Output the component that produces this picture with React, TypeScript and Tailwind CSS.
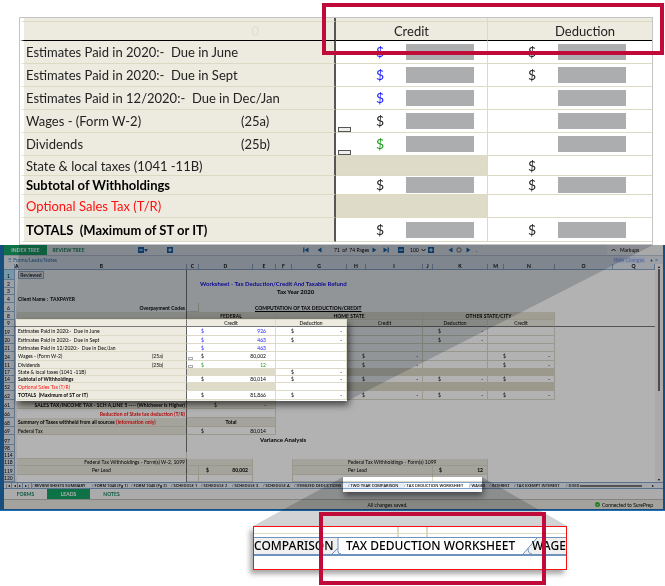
import type { ReactNode } from "react";
import clsx from "clsx";

type BigRow = {
  label: string;
  code?: string;
  height: string;
  labelClass?: string;
  creditSign?: string;
  creditBox?: boolean;
  creditShaded?: boolean;
  deductionSign?: boolean;
  deductionBox?: boolean;
  handle?: boolean;
};

const bigRows: BigRow[] = [
  { label: "Estimates Paid in 2020:-  Due in June", height: "h-[23px]", creditSign: "text-[#1a1aff]", creditBox: true, deductionSign: true, deductionBox: true },
  { label: "Estimates Paid in 2020:-  Due in Sept", height: "h-[23px]", creditSign: "text-[#1a1aff]", creditBox: true, deductionSign: true, deductionBox: true },
  { label: "Estimates Paid in 12/2020:-  Due in Dec/Jan", height: "h-[23px]", creditSign: "text-[#1a1aff]", creditBox: true, deductionBox: true },
  { label: "Wages - (Form W-2)", code: "(25a)", height: "h-[23px]", creditSign: "text-[#222]", creditBox: true, deductionBox: true, handle: true },
  { label: "Dividends", code: "(25b)", height: "h-[23px]", creditSign: "text-[#1c9a1c]", creditBox: true, deductionBox: true, handle: true },
  { label: "State & local taxes (1041 -11B)", height: "h-[20px]", creditShaded: true, deductionSign: true },
  { label: "Subtotal of Withholdings", height: "h-[19px]", labelClass: "font-bold text-black", creditSign: "text-[#222]", creditBox: true, deductionSign: true, deductionBox: true },
  { label: "Optional Sales Tax (T/R)", height: "h-[23px]", labelClass: "text-[#ff1010]", creditShaded: true },
  { label: "TOTALS  (Maximum of ST or IT)", height: "h-[24px]", labelClass: "font-bold text-black", creditSign: "text-[#222]", creditBox: true, deductionSign: true, deductionBox: true },
];

function HiddenAmount({ sign, box }: { sign?: string; box?: boolean }) {
  return (
    <div className="flex items-center pl-10">
      <span className={clsx("w-[30px] text-[14px] leading-4", sign)}>{sign ? "$" : ""}</span>
      {box && <span className="h-4 w-[68px] bg-[#abadaf]" />}
    </div>
  );
}

function Magnified() {
  return (
    <div className="relative mr-3 ml-[19px]">
      <div className="border border-[#c4c4c4] bg-white pb-[2px]">
        <table className="w-full table-fixed border-separate border-spacing-0 text-[13px] leading-4 text-[#222]">
          <colgroup>
            <col className="w-[316px]" />
            <col className="w-[152px]" />
            <col />
          </colgroup>
          <thead>
            <tr className="h-1">
              <td className="border-r-2 border-b border-l-4 border-r-[#555] border-b-[#dddac4] border-l-white bg-[#edebe0] p-0" />
              <td className="border-r border-b border-[#dddac4] bg-[#edebe0] p-0" />
              <td className="border-b border-[#dddac4] bg-[#edebe0] p-0" />
            </tr>
            <tr className="h-[19px]">
              <th className="border-r-2 border-b border-l-4 border-r-[#555] border-b-black border-l-white bg-[#edebe0] py-0 pr-[75px] text-right font-normal text-[#dfddd2]">0</th>
              <th className="border-r border-b border-r-[#dddac4] border-b-black bg-[#edebe0] p-0 text-center font-normal">Credit</th>
              <th className="border-b border-black bg-[#edebe0] py-0 pr-0 pl-[30px] text-center font-normal">Deduction</th>
            </tr>
          </thead>
          <tbody>
            {bigRows.map((row) => (
              <tr key={row.label} className={row.height}>
                <th className="border-r-2 border-b border-l-4 border-r-[#555] border-b-[#dddac4] border-l-white bg-[#edebe0] py-0 pr-0 pl-[2px] text-left font-normal">
                  <div className={clsx("flex whitespace-pre", row.labelClass)}>
                    <span className={row.code ? "w-[215px]" : ""}>{row.label}</span>
                    {row.code && <span>{row.code}</span>}
                  </div>
                </th>
                <td className={clsx("relative border-r border-b border-[#dddac4] p-0", row.creditShaded && "bg-[#dedcc8]")}>
                  <HiddenAmount sign={row.creditSign} box={row.creditBox} />
                  {row.handle && <span className="absolute bottom-0 left-[2px] h-[5px] w-[13px] border border-[#555] bg-[#eee]" />}
                </td>
                <td className="border-b border-[#dddac4] p-0">
                  <HiddenAmount sign={row.deductionSign ? "text-[#222]" : undefined} box={row.deductionBox} />
                </td>
              </tr>
            ))}
          </tbody>
        </table>
      </div>
      <div className="absolute -top-[14px] -right-[11px] left-[303px] h-[52px] border-4 border-[#c00a3a]" />
    </div>
  );
}

/* ---------- small worksheet window ---------- */

function Arrow({ left, bar }: { left?: boolean; bar?: boolean }) {
  return (
    <svg viewBox="0 0 6 6" className={clsx("h-[6px] w-[6px]", left && "rotate-180")} fill="#1663ad">
      <path d="M0.5 0.5L4.5 3L0.5 5.5Z" />
      {bar && <path d="M4.6 0.5H5.8V5.5H4.6Z" />}
    </svg>
  );
}

function Square({ plus }: { plus?: boolean }) {
  return (
    <svg viewBox="0 0 6 6" className="h-[6px] w-[6px]">
      <path d="M0 0H6V6H0Z" fill="#1663ad" />
      <path d={plus ? "M1.2 3H4.8M3 1.2V4.8" : "M1.2 3H4.8"} stroke="#fff" strokeWidth="1" />
    </svg>
  );
}

function Toolbar() {
  return (
    <div className="flex h-[10px] items-center bg-[#e6ebf0] text-[5px] leading-[6px] text-black">
      <button className="h-full w-[43px] bg-[#15a366] font-bold text-white">INDEX TREE</button>
      <button className="h-full w-[43px] font-bold text-[#14805a]">REVIEW TREE</button>
      <div className="ml-[48px] flex w-[35px] items-center justify-between">
        <button className="flex" aria-label="Collapse tree">
          <Square />
          <svg viewBox="0 0 4 6" className="h-[6px] w-1" fill="#1663ad"><path d="M0 2H4L2 5Z" /></svg>
        </button>
        <button aria-label="Expand tree"><Square plus /></button>
      </div>
      <div className="ml-[130px] flex items-center">
        <button className="w-[13px]" aria-label="First page"><Arrow left bar /></button>
        <button className="w-[18px]" aria-label="Previous page"><Arrow left /></button>
        <span className="w-[38px] whitespace-pre">71  of  74 Pages</span>
        <button className="w-[11px]" aria-label="Next page"><Arrow /></button>
        <button className="w-[15px]" aria-label="Last page"><Arrow bar /></button>
        <button className="w-3" aria-label="Zoom out"><Square /></button>
        <span className="flex w-[18px] items-center gap-[2px]">
          100
          <svg viewBox="0 0 5 4" className="h-1 w-[5px]" fill="none" stroke="#222"><path d="M0.5 1L2.5 3L4.5 1" /></svg>
        </span>
        <button className="w-[19px]" aria-label="Zoom in"><Square plus /></button>
        <button className="w-[9px]" aria-label="Back"><Arrow left /></button>
        <svg viewBox="0 0 6 6" className="h-[6px] w-[6px]" fill="none" stroke="#555"><circle cx="3" cy="3" r="2.2" strokeWidth="0.8" /></svg>
        <button className="ml-1" aria-label="Forward"><Arrow /></button>
        <span className="ml-1">.</span>
      </div>
      <button className="ml-auto flex h-full w-[56px] items-center gap-1 bg-[#f2f3f4] pl-1">
        <svg viewBox="0 0 5 4" className="h-1 w-[5px]" fill="none" stroke="#222"><path d="M0.5 3L2.5 1L4.5 3" /></svg>
        Markups
      </button>
    </div>
  );
}

const columns = ["A", "B", "C", "D", "E", "F", "G", "H", "I", "J", "K", "M", "N", "O", "Q"];

function Money({ value, className, pad = "pl-[15px] pr-1" }: { value: string; className?: string; pad?: string }) {
  return (
    <div className={clsx("flex justify-between", pad, className)}>
      <span>$</span>
      <span>{value}</span>
    </div>
  );
}

function Row({ n, h, children }: { n: string; h: string; children?: ReactNode }) {
  return (
    <tr className={h}>
      <th className={clsx("border-r border-b border-[#8fa9c9] p-0 pr-1 text-right align-bottom font-normal text-black", n === "1" ? "bg-[#a8dcf5]" : "bg-[#dfe7f1]")}>{n}</th>
      <td className="bg-[#eef1f5] p-0" />
      {children}
    </tr>
  );
}

const line = "border-b border-[#dddac8]";
const cell = "border-r border-b border-[#dddac8] p-0";
const label = "border-b border-r border-b-[#dddac8] border-r-[#666] bg-[#edebe0] p-0 pl-px text-left font-normal";
const plain = "border-r border-[#777] p-0 pl-px";

type SmallRow = {
  n: string;
  h: string;
  name: string;
  code?: string;
  nameClass?: string;
  federal?: string;
  federalClass?: string;
  shaded?: boolean;
  home?: boolean;
  homeCredit?: boolean;
  other?: boolean;
  otherCredit?: boolean;
};

const smallRows: SmallRow[] = [
  { n: "19", h: "h-[9px]", name: "Estimates Paid in 2020:-  Due in June", federal: "926", federalClass: "text-[#1a1aff]", home: true, other: true },
  { n: "20", h: "h-[8px]", name: "Estimates Paid in 2020:-  Due in Sept", federal: "463", federalClass: "text-[#1a1aff]", home: true, other: true },
  { n: "21", h: "h-[8px]", name: "Estimates Paid in 12/2020:-  Due in Dec/Jan", federal: "463", federalClass: "text-[#1a1aff]" },
  { n: "24", h: "h-[9px]", name: "Wages - (Form W-2)", code: "(25a)", federal: "80,002", homeCredit: true, otherCredit: true },
  { n: "11", h: "h-[8px]", name: "Dividends", code: "(25b)", federal: "12", federalClass: "text-[#1c9a1c]", homeCredit: true, otherCredit: true },
  { n: "17", h: "h-[7px]", name: "State & local taxes (1041 -11B)", shaded: true, home: true },
  { n: "14", h: "h-[7px]", name: "Subtotal of Withholdings", nameClass: "font-bold", federal: "80,014", home: true, homeCredit: true, other: true, otherCredit: true },
  { n: "52", h: "h-[8px]", name: "Optional Sales Tax (T/R)", nameClass: "text-[#ff1010]", shaded: true },
  { n: "62", h: "h-[9px]", name: "TOTALS  (Maximum of ST or IT)", nameClass: "font-bold", federal: "81,866", home: true, homeCredit: true, other: true, otherCredit: true },
];

function Worksheet() {
  return (
    <table className="w-full table-fixed border-separate border-spacing-0 bg-white text-[5px] leading-[6px] text-black">
      <colgroup>
        <col className="w-[11px]" />
        <col className="w-[2px]" />
        <col className="w-[170px]" />
        <col className="w-[12px]" />
        <col className="w-[54px]" />
        <col className="w-[23px]" />
        <col className="w-[16px]" />
        <col className="w-[55px]" />
        <col className="w-[19px]" />
        <col className="w-[57px]" />
        <col className="w-[10px]" />
        <col className="w-[55px]" />
        <col className="w-[16px]" />
        <col className="w-[51px]" />
        <col className="w-[58px]" />
        <col />
      </colgroup>
      <thead>
        <tr className="h-[6px] bg-[#dfe7f1] leading-[5px]">
          <th className="border-r border-b border-[#8fa9c9] p-0" />
          {columns.map((c) => (
            <th key={c} className="border-r border-b border-[#8fa9c9] p-0 text-center">{c}</th>
          ))}
        </tr>
      </thead>
      <tbody>
        <Row n="1" h="h-[10px]">
          <td className={plain}>
            <button className="block h-2 w-[26px] border border-[#9fb4d0] bg-[#eef1f5] text-[5px] leading-[6px]">Reviewed</button>
          </td>
        </Row>
        <Row n="2" h="h-[8px]">
          <td className={plain} />
          <td colSpan={13} className="p-0 pl-[13px] text-[6px] font-bold whitespace-nowrap text-[#1010ee]">Worksheet - Tax Deduction/Credit And Taxable Refund</td>
        </Row>
        <Row n="3" h="h-[7px]">
          <td className={plain} />
          <td colSpan={13} className="p-0 pl-[90px] text-[6px] font-bold">Tax Year 2020</td>
        </Row>
        <Row n="4" h="h-[8px]">
          <td className={clsx(plain, "font-bold whitespace-pre")}>Client Name :  TAXPAYER</td>
        </Row>
        <Row n="6" h="h-[9px]">
          <td className={clsx(plain, "pr-px text-right font-bold")}>Overpayment Codes</td>
          <td className={cell} />
          <td colSpan={12} className="p-0 pl-[56px] font-bold underline">COMPUTATION OF TAX DEDUCTION/CREDIT</td>
        </Row>
        <Row n="8" h="h-[8px]">
          <td className={label} />
          <th colSpan={3} className={clsx(cell, "bg-[#e6e3d3]")}>FEDERAL</th>
          <th colSpan={4} className={clsx(cell, "bg-[#e6e3d3]")}>HOME STATE</th>
          <th colSpan={4} className={clsx(cell, "bg-[#e6e3d3]")}>OTHER STATE/CITY</th>
        </Row>
        <tr className="h-[7px]">
          <th className="border-r border-b border-[#8fa9c9] bg-[#dfe7f1] p-0 pr-1 text-right font-normal">9</th>
          <td className="border-b border-[#777] bg-[#edebe0] p-0" />
          <td className="border-r border-b border-[#777] bg-[#edebe0] p-0" />
          {["Credit", "Deduction", "Credit", "Deduction", "Credit"].map((name, i) => (
            <th key={i} colSpan={i === 0 ? 3 : 2} className="border-r border-b border-r-[#dddac8] border-b-[#777] bg-[#edebe0] p-0 text-center font-normal">{name}</th>
          ))}
          <td colSpan={2} className="border-b border-[#777] p-0" />
        </tr>
        {smallRows.map((r) => {
          const tone = r.shaded && "bg-[#dedcc8]";
          return (
            <Row key={r.n} n={r.n} h={r.h}>
              <th className={label}>
                <div className={clsx("flex whitespace-pre", r.nameClass)}>
                  <span className={r.code ? "w-[134px]" : ""}>{r.name}</span>
                  {r.code && <span>{r.code}</span>}
                </div>
              </th>
              <td colSpan={3} className={clsx(cell, "relative", tone)}>
                {r.federal && <Money value={r.federal} className={r.federalClass} pad="pl-[14px] pr-[9px]" />}
                {r.code && <span className="absolute bottom-0 left-px h-[3px] w-[5px] border border-[#aaa]" />}
              </td>
              <td colSpan={2} className={cell}>{r.home && <Money value="-" />}</td>
              <td colSpan={2} className={clsx(cell, tone)}>{r.homeCredit && <Money value="-" />}</td>
              <td colSpan={2} className={clsx(cell, tone)}>{r.other && <Money value="-" />}</td>
              <td colSpan={2} className={clsx(cell, tone)}>{r.otherCredit && <Money value="-" />}</td>
            </Row>
          );
        })}
        <Row n="61" h="h-[9px]">
          <td className={clsx(label, "pr-px text-right! align-bottom font-bold! whitespace-nowrap")}>SALES TAX/INCOME TAX - SCH A,LINE 5 ---- (Whichever is Higher)</td>
          <td colSpan={3} className={clsx(cell, "bg-[#edebe0] align-bottom")}><Money value="-" pad="pl-[27px] pr-[9px]" /></td>
        </Row>
        <Row n="66" h="h-[9px]">
          <td className={clsx(plain, "pr-px text-right font-bold text-[#ff1010]")}>Reduction of State tax deduction (T/R)</td>
          <td colSpan={3} className={cell} />
        </Row>
        <Row n="68" h="h-[9px]">
          <td className={clsx(label, "font-bold! whitespace-nowrap")}>Summary of Taxes withheld from all sources <span className="text-[#ff1010]">(Information only)</span></td>
          <th colSpan={3} className={clsx(cell, "bg-[#edebe0]")}>Total</th>
        </Row>
        <Row n="69" h="h-[8px]">
          <td className={label}>Federal Tax</td>
          <td colSpan={3} className={cell}><Money value="80,014" pad="pl-[14px] pr-[9px]" /></td>
        </Row>
        <Row n="97" h="h-[10px]">
          <td className={plain} />
          <td colSpan={13} className="p-0 pl-[73px] text-[6px] font-bold">Variance Analysis</td>
        </Row>
        <Row n="98" h="h-[7px]"><td className={plain} /></Row>
        <Row n="114" h="h-[6px]"><td className={clsx(plain, line)} /></Row>
        <Row n="118" h="h-[7px]">
          <td className={clsx(label, "pr-px text-right!")}>Federal Tax Withholdings - Form(s) W-2, 1099</td>
          <td colSpan={2} className={clsx(cell, "bg-[#edebe0]")} />
          <td colSpan={2} />
          <td colSpan={5} className={clsx(cell, "border-l bg-[#edebe0] pl-[55px]!")}>Federal Tax Withholdings - Form(s) 1099</td>
        </Row>
        <Row n="119" h="h-[9px]">
          <td className={clsx(label, "pl-[75px]!")}>Per Lead</td>
          <td className={clsx(cell, "bg-[#edebe0]")} />
          <td className={clsx(cell, "bg-[#edebe0] font-bold")}><Money value="80,002" pad="pl-[7px] pr-1" /></td>
          <td colSpan={2} />
          <td colSpan={4} className={clsx(cell, "border-l bg-[#edebe0] pl-[55px]!")}>Per Lead</td>
          <td className={clsx(cell, "bg-[#edebe0] font-bold")}><Money value="12" pad="pl-[6px] pr-1" /></td>
        </Row>
        <Row n="120" h="h-[7px]">
          <td className={plain} />
          <td className={cell} />
          <td className={cell} />
          <td colSpan={2} />
          <td colSpan={4} className={clsx(cell, "border-l")} />
          <td className={cell} />
        </Row>
      </tbody>
    </table>
  );
}

const sheets = [
  { name: "REVIEW SHEETS SUMMARY", width: "w-[60px]" },
  { name: "FORM 1040 (Pg 1)", width: "w-[39px]" },
  { name: "FORM 1040 (Pg 2)", width: "w-[40px]" },
  { name: "SCHEDULE 1", width: "w-[30px]" },
  { name: "SCHEDULE 2", width: "w-[31px]" },
  { name: "SCHEDULE 3", width: "w-[31px]" },
  { name: "SCHEDULE A", width: "w-[31px]" },
  { name: "ITEMIZED DEDUCTIONS", width: "w-[54px]" },
  { name: "TWO YEAR COMPARISON", width: "w-[56px]" },
  { name: "TAX DEDUCTION WORKSHEET", width: "w-[65px]" },
  { name: "WAGES", width: "w-[20px]" },
  { name: "INTEREST", width: "w-[25px]" },
  { name: "TAX EXEMPT INTEREST", width: "w-[52px]" },
  { name: "DIVID", width: "w-[14px]" },
];

function SheetTabs() {
  return (
    <div className="flex h-[7px] items-center border-y border-[#7fa3cf] bg-[#e9eef5] font-['Open_Sans',sans-serif] text-[4px] leading-[5px] text-black">
      <div className="flex w-[28px] shrink-0 justify-around">
        {["|◂", "◂", "▸", "▸|"].map((s) => (
          <button key={s} className="h-[5px] border-r border-[#8fa9c9] px-px">{s}</button>
        ))}
      </div>
      {sheets.map((s) => (
        <button key={s.name} className={clsx("flex h-[5px] shrink-0 gap-px font-semibold whitespace-nowrap", s.width, s.name.startsWith("TAX DED") && "bg-white")}>
          <span className="text-[#4f81bd]">/</span>
          {s.name}
        </button>
      ))}
      <div className="h-[2px] w-[62px] bg-[#777]" />
      <span className="ml-[10px]">▸</span>
    </div>
  );
}

function SheetWindow() {
  return (
    <div className="relative">
      <div className="border-r-2 border-b-2 border-l-4 border-[#1f6fb8] bg-white">
        <Toolbar />
        <div className="flex h-[9px] items-center border-t border-[#b9c6d6] bg-[#dfe5ec] px-1 text-[5px] leading-[6px] text-[#2a6db0]">
          <span>⠿ Forms/Leads/Notes</span>
          <button className="ml-auto w-8 bg-[#cfdcf5] text-[#7b93d6]">Hide Changes</button>
          <button className="ml-1 w-[5px]" aria-label="Pin">♦</button>
          <button className="w-[5px]" aria-label="Close">×</button>
        </div>
        <div className="flex">
          <div className="min-w-0 flex-1">
            <Worksheet />
          </div>
          <div className="flex w-2 flex-col items-center bg-[#f4f4f4] text-[4px] leading-[5px] text-black">
            <span>▴</span>
            <div className="h-[122px] w-[2px] bg-[#6d6d6d]" />
            <span className="mt-auto">▾</span>
          </div>
        </div>
        <SheetTabs />
        <div className="flex h-[10px] bg-[#f5f5f5] text-[5px] leading-[6px] font-bold text-[#14805a]">
          <button className="w-[43px]">FORMS</button>
          <button className="w-[43px] bg-[#15a366] text-white">LEADS</button>
          <button className="w-[43px]">NOTES</button>
        </div>
        <div className="relative flex h-[10px] items-center justify-center border-t border-[#bbb] bg-[#e9e8e0] pl-[108px] text-[5px] leading-[6px] text-black">
          <span>All changes saved.</span>
          <span className="absolute right-[10px] flex items-center gap-[2px]">
            <svg viewBox="0 0 6 6" className="h-[5px] w-[5px]">
              <circle cx="3" cy="3" r="3" fill="#1db81d" />
              <path d="M1.5 3L2.6 4.2L4.6 1.9" fill="none" stroke="#fff" strokeWidth="0.9" />
            </svg>
            Connected to SurePrep
          </span>
        </div>
      </div>

      {/* dimmed area with two clear openings, plus the callout beams */}
      <svg className="pointer-events-none absolute top-0 left-0 h-[281px] w-full mix-blend-multiply">
        <path d="M0 0H4000V265H0Z M16 74V156H347V74Z M343 232V247H482V232Z" fill="#b2b2b2" fillRule="evenodd" />
      </svg>
      <svg className="pointer-events-none absolute top-0 left-0 h-[281px] w-full mix-blend-multiply">
        <path d="M19 0H653L347 156V74H16Z" fill="#d1d5da" />
        <path d="M343 232L253 281H567L482 232V247H343Z" fill="#d1d3d5" />
      </svg>
      <div className="pointer-events-none absolute top-[74px] left-4 h-[82px] w-[331px] shadow-[2px_4px_7px_rgba(0,0,0,0.6)]" />
      <div className="pointer-events-none absolute top-[232px] left-[343px] h-[15px] w-[139px] shadow-[1px_4px_6px_rgba(0,0,0,0.5)]" />
    </div>
  );
}

function TabCallout() {
  return (
    <div className="relative mt-[15px] ml-[253px] w-[314px]">
      <div className="overflow-hidden border border-[#ff1010] bg-white shadow-[-3px_4px_5px_rgba(0,0,0,0.35)]">
        <div className="flex h-[10px]">
          <div className="w-[145px] border-r-2 border-[#dddac4]"><div className="h-[7px] border-b border-[#dddac4]" /></div>
          <div className="w-[29px] border-r-2 border-[#dddac4]"><div className="h-[7px] border-b border-[#dddac4]" /></div>
          <div className="flex-1"><div className="h-[7px] border-b border-[#dddac4]" /></div>
        </div>
        <div className="relative flex h-[19px] items-center border-t border-b-2 border-[#6d93bd] bg-[#f0f0f0] font-['Noto_Sans',sans-serif] text-[12px] leading-4 font-medium whitespace-nowrap text-black">
          <svg className="absolute inset-0 h-full w-full" viewBox="0 0 312 16" preserveAspectRatio="none">
            <path d="M84 0V13Q84 16 87 16H269L283 0Z" fill="#fff" />
            <path d="M78 16L84 10M84 0V13Q84 16 87 16M269 16L283 0M274 10Q274 16 278 16" fill="none" stroke="#6d93bd" />
          </svg>
          <button className="relative w-[84px] shrink-0 text-left">COMPARISON</button>
          <button className="relative w-[190px] shrink-0 pl-2 text-left">TAX DEDUCTION WORKSHEET</button>
          <button className="relative pl-1">WAGE</button>
        </div>
        <div className="h-[13px]" />
      </div>
      <div className="absolute -top-[14px] left-[66px] h-[73px] w-[227px] border-4 border-[#c00a3a]" />
    </div>
  );
}

export default function App() {
  return (
    <main className="overflow-hidden bg-white pt-[17px] pb-4 font-[Lato,'Liberation_Sans',sans-serif]">
      <Magnified />
      <SheetWindow />
      <TabCallout />
    </main>
  );
}
